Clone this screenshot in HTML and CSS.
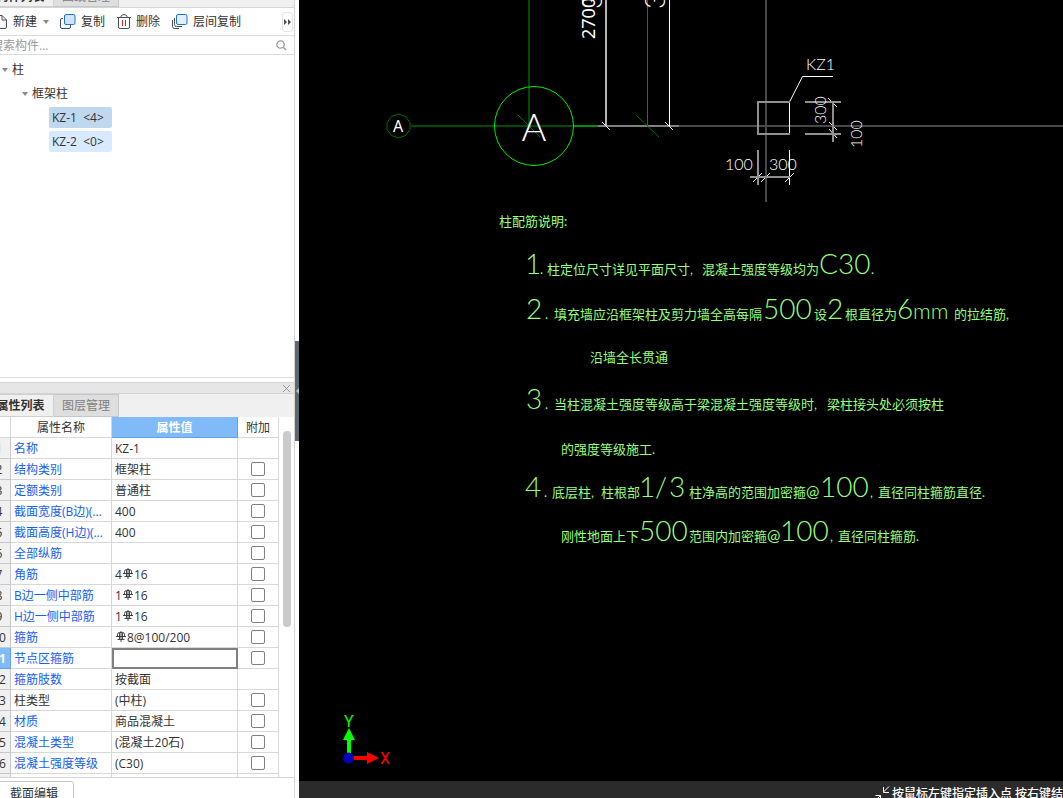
FILE: index.html
```html
<!DOCTYPE html>
<html lang="zh-CN">
<head>
  <meta charset="UTF-8" />
  <meta name="viewport" content="width=device-width, initial-scale=1.0" />
  <title>KZ-1</title>
  <link rel="stylesheet" href="styles.css">
</head>
<body>
  <svg class="defs" aria-hidden="true">
    <!-- rebar grade mark -->
    <symbol id="rebar" viewBox="0 0 10 11">
      <path d="M1.500 6V3.500Q1.500 1.500 3.500 1.500H6.500Q8.500 1.500 8.500 3.500V6M3.500 2V8M6.500 2V8M5 0V11M0 5.500H10M1.500 8.500H8.500" fill="none" stroke="#333" stroke-width=".9" />
    </symbol>
  </svg>

  <div class="app">
    <aside class="dock">
      <div class="tabs tabs-top">
        <button class="tab active">构件列表</button>
        <button class="tab">图纸管理</button>
      </div>

      <div class="toolbar">
        <button class="tool">
          <svg width="20" height="16" viewBox="0 0 20 16"><path d="M6 1.500H14L18.500 6V13Q18.500 14.500 17 14.500H6M14 1.500V6H18.500" fill="none" stroke="#45505c" /></svg>
          <span>新建</span>
          <span class="caret"></span>
        </button>
        <button class="tool">
          <svg width="16" height="16" viewBox="0 0 16 16"><path d="M3 4.500H2Q.5 4.500 .5 6V13Q.5 14.500 2 14.500H9Q10.500 14.500 10.500 13V11" fill="none" stroke="#45505c" /><rect x="4.500" y=".5" width="10.500" height="10" rx="1.500" fill="#d2e4fb" stroke="#1a73e8" /></svg>
          <span>复制</span>
        </button>
        <button class="tool">
          <svg width="14" height="16" viewBox="0 0 14 16"><path d="M0 3.500H14M1.500 3.500V13Q1.500 14.500 3 14.500H11Q12.500 14.500 12.500 13V3.500M3.500 3.500Q4 .5 7 .5T10.500 3.500" fill="none" stroke="#45505c" /><path d="M5.500 6V12M8.500 6V12" stroke="#e02020" /></svg>
          <span>删除</span>
        </button>
        <button class="tool">
          <svg width="16" height="16" viewBox="0 0 16 16"><path d="M.5 6V12.500Q.5 14.500 2.500 14.500H7M2.500 4V10.500Q2.500 12.500 4.500 12.500H10" fill="none" stroke="#45505c" /><rect x="4.500" y=".5" width="10.500" height="10" rx="1.500" fill="#e3effd" stroke="#1a73e8" /></svg>
          <span>层间复制</span>
        </button>
        <button class="more" aria-label="更多">
          <svg width="7" height="6" viewBox="0 0 7 6"><path d="M0 0L3 3L0 6ZM4 0L7 3L4 6Z" fill="#45505c" /></svg>
        </button>
      </div>

      <div class="search">
        <input type="text" placeholder="搜索构件..." aria-label="搜索构件">
        <svg width="11" height="11" viewBox="0 0 11 11"><circle cx="4.500" cy="4.500" r="3.700" fill="none" stroke="#9a9a9a" stroke-width="1.300" /><path d="M7.500 7.500L10 10" stroke="#9a9a9a" stroke-width="1.300" /></svg>
      </div>

      <ul class="tree">
        <li class="level-1"><span class="caret"></span>柱</li>
        <li class="level-2"><span class="caret"></span>框架柱</li>
        <li class="level-3"><span class="chip selected">KZ-1 &nbsp;&lt;4&gt;</span></li>
        <li class="level-3"><span class="chip">KZ-2 &nbsp;&lt;0&gt;</span></li>
      </ul>

      <div class="pane-title">
        <button class="close" aria-label="关闭">
          <svg width="7" height="7" viewBox="0 0 7 7"><path d="M0 0L7 7M7 0L0 7" stroke="#999" /></svg>
        </button>
      </div>

      <div class="tabs">
        <button class="tab active">属性列表</button>
        <button class="tab">图层管理</button>
      </div>

      <div class="props">
        <table>
          <thead>
            <tr><th class="num"></th><th class="name">属性名称</th><th class="value current">属性值</th><th class="extra">附加</th></tr>
          </thead>
          <tbody>
            <tr><td class="num first">1</td><td class="name">名称</td><td>KZ-1</td><td class="extra"></td></tr>
            <tr><td class="num">2</td><td class="name">结构类别</td><td>框架柱</td><td class="extra"><input type="checkbox" aria-label="结构类别"></td></tr>
            <tr><td class="num">3</td><td class="name">定额类别</td><td>普通柱</td><td class="extra"><input type="checkbox" aria-label="定额类别"></td></tr>
            <tr><td class="num">4</td><td class="name">截面宽度(B边)(...</td><td>400</td><td class="extra"><input type="checkbox" aria-label="截面宽度"></td></tr>
            <tr><td class="num">5</td><td class="name">截面高度(H边)(...</td><td>400</td><td class="extra"><input type="checkbox" aria-label="截面高度"></td></tr>
            <tr><td class="num">6</td><td class="name">全部纵筋</td><td></td><td class="extra"><input type="checkbox" aria-label="全部纵筋"></td></tr>
            <tr><td class="num">7</td><td class="name">角筋</td><td>4<svg class="rebar"><use href="#rebar" /></svg>16</td><td class="extra"><input type="checkbox" aria-label="角筋"></td></tr>
            <tr><td class="num">8</td><td class="name">B边一侧中部筋</td><td>1<svg class="rebar"><use href="#rebar" /></svg>16</td><td class="extra"><input type="checkbox" aria-label="B边一侧中部筋"></td></tr>
            <tr><td class="num">9</td><td class="name">H边一侧中部筋</td><td>1<svg class="rebar"><use href="#rebar" /></svg>16</td><td class="extra"><input type="checkbox" aria-label="H边一侧中部筋"></td></tr>
            <tr><td class="num">10</td><td class="name">箍筋</td><td><svg class="rebar"><use href="#rebar" /></svg>8@100/200</td><td class="extra"><input type="checkbox" aria-label="箍筋"></td></tr>
            <tr><td class="num current">11</td><td class="name">节点区箍筋</td><td class="editing"><input type="text" aria-label="节点区箍筋"></td><td class="extra"><input type="checkbox" aria-label="节点区箍筋附加"></td></tr>
            <tr><td class="num">12</td><td class="name">箍筋肢数</td><td>按截面</td><td class="extra"></td></tr>
            <tr><td class="num">13</td><td class="name plain">柱类型</td><td>(中柱)</td><td class="extra"><input type="checkbox" aria-label="柱类型"></td></tr>
            <tr><td class="num">14</td><td class="name">材质</td><td>商品混凝土</td><td class="extra"><input type="checkbox" aria-label="材质"></td></tr>
            <tr><td class="num">15</td><td class="name">混凝土类型</td><td>(混凝土20石)</td><td class="extra"><input type="checkbox" aria-label="混凝土类型"></td></tr>
            <tr><td class="num">16</td><td class="name">混凝土强度等级</td><td>(C30)</td><td class="extra"><input type="checkbox" aria-label="混凝土强度等级"></td></tr>
            <tr><td class="num"></td><td class="name"></td><td></td><td class="extra"></td></tr>
          </tbody>
        </table>
        <div class="track"><div class="thumb"></div></div>
      </div>

      <div class="dock-footer">
        <button class="section-edit">截面编辑</button>
      </div>
    </aside>

    <div class="splitter">
      <button class="collapse" aria-label="收起">
        <svg width="3" height="6" viewBox="0 0 3 6"><path d="M3 0V6L0 3Z" fill="#b8c0c6" /></svg>
      </button>
    </div>

    <main class="view">
      <svg class="drawing" viewBox="299 0 764 781" preserveAspectRatio="xMinYMin meet">
        <!-- axis lines -->
        <g fill="none" stroke-width="2">
          <path d="M529 0V126M411 126H574" stroke="#004a00" />
          <path d="M574 126H598" stroke="#009000" />
          <path d="M598 126H679" stroke="#808080" />
          <path d="M679 126H1063M766 0V202" stroke="#484848" />
          <path d="M606 0V126" stroke="#b4b4b4" />
        </g>
        <path d="M647.500 0V126" stroke="#008c00" />
        <path d="M669.500 0V126" stroke="#fff" />
        <path d="M518 115L540 137M636 115L659 137" stroke="#007000" />
        <path d="M602 122L610 130M665 122L673 130" stroke="#fff" />

        <!-- axis bubbles -->
        <path d="M398.500 114L405.500 116.500L410 122.500V129.500L405.500 135.500L398.500 138L391.500 135.500L387 129.500V122.500L391.500 116.500Z" fill="none" stroke="#007000" />
        <text class="axis" x="393" y="132">A</text>
        <circle cx="534" cy="126" r="39.500" fill="none" stroke="#00f000" />
        <text class="axis-big" x="534" y="141" text-anchor="middle">A</text>

        <!-- dimension text cut by the top edge -->
        <text class="dim-bold" transform="translate(595 39) rotate(-90)">2700</text>
        <text class="cad" transform="translate(602 9) rotate(-90)">3</text>
        <text class="cad" transform="translate(665 9) rotate(-90)">3</text>

        <!-- column KZ1 -->
        <g fill="none" stroke="#fff">
          <path d="M789.500 134V102L802.500 76.500H833" />
          <path d="M789.500 150V185" />
          <path d="M753 182L762 173M761 182L770 173M785 182L794 173" />
          <path d="M828 98L837 107M829 122L837 130M829 129L837 138" />
        </g>
        <g fill="none" stroke="#909090" stroke-width="2">
          <path d="M790 102H758V134H790" />
          <path d="M758 150V185M750 177H790" />
          <path d="M805 102H841M805 134H841M833 102V142" />
        </g>
        <text class="dim" x="806" y="70">KZ1</text>
        <text class="dim" x="725" y="170">100</text>
        <text class="dim" x="769" y="170">300</text>
        <text class="dim" transform="translate(826 124) rotate(-90)">300</text>
        <text class="dim" transform="translate(862 148) rotate(-90)">100</text>

        <!-- notes -->
        <g class="notes">
          <text x="499" y="226">柱配筋说明:</text>
          <text y="274"><tspan class="cad" x="525">1</tspan><tspan x="540">.</tspan><tspan x="547">柱定位尺寸详见平面尺寸,</tspan><tspan x="702">混凝土强度等级均为</tspan><tspan class="cad" x="819">C</tspan><tspan class="cad" x="838">30</tspan><tspan x="871">.</tspan></text>
          <text y="319"><tspan class="cad" x="526">2</tspan><tspan x="545">.</tspan><tspan x="554">填充墙应沿框架柱及剪力墙全高每隔</tspan><tspan class="cad" x="763">500</tspan><tspan x="814">设</tspan><tspan class="cad" x="827">2</tspan><tspan x="845">根直径为</tspan><tspan class="cad" x="897">6</tspan><tspan class="cad mm" x="913">mm</tspan><tspan x="954">的拉结筋,</tspan></text>
          <text x="590" y="362">沿墙全长贯通</text>
          <text y="409"><tspan class="cad" x="526">3</tspan><tspan x="545">.</tspan><tspan x="554">当柱混凝土强度等级高于梁混凝土强度等级时,</tspan><tspan x="827">梁柱接头处必须按柱</tspan></text>
          <text x="561" y="454">的强度等级施工.</text>
          <text y="497"><tspan class="cad" x="525">4</tspan><tspan x="544">.</tspan><tspan x="552">底层柱,</tspan><tspan x="601">柱根部</tspan><tspan class="cad" x="639">1</tspan><tspan class="cad" x="655">/</tspan><tspan class="cad" x="669">3</tspan><tspan x="689">柱净高的范围加密箍</tspan><tspan class="mark" x="806">@</tspan><tspan class="cad" x="820">100</tspan><tspan x="870">,</tspan><tspan x="878">直径同柱箍筋直径.</tspan></text>
          <text y="541"><tspan x="561">刚性地面上下</tspan><tspan class="cad" x="639">500</tspan><tspan x="689">范围内加密箍</tspan><tspan class="mark" x="767">@</tspan><tspan class="cad" x="780">100</tspan><tspan x="830">,</tspan><tspan x="838">直径同柱箍筋.</tspan></text>
        </g>

        <!-- coordinate icon -->
        <path d="M347 755V740H343L349 728L355 740H351V755Z" fill="#0f0" />
        <path d="M353 756H367V752L379 758L367 764V760H353Z" fill="#f00" />
        <circle cx="348.500" cy="758" r="5.500" fill="#0000b8" />
        <text class="ucs" x="344" y="727" fill="#0f0">Y</text>
        <text class="ucs" x="380" y="764" fill="#f00">X</text>
      </svg>
      <footer class="status">
        <svg width="16" height="16" viewBox="0 0 16 16"><path d="M15 .5L9.500 6M9.500 1V6.500H15M1 15L6.500 9.500M1.500 9.500H6.500V14.500" fill="none" stroke="#fff" /></svg>
        <span>按鼠标左键指定插入点 按右键结</span>
      </footer>
    </main>
  </div>
</body>
</html>
```
FILE: styles.css
```css
* {
  box-sizing: border-box;
}
body {
  margin: 0;
  background: #fff;
  color: #333;
  font-family: "Open Sans", "Noto Sans CJK SC", sans-serif;
  font-size: 12px;
  line-height: 16px;
  overflow: hidden;
}
button,
input {
  font: inherit;
  color: inherit;
  margin: 0;
}
button {
  padding: 0;
  border: 0;
  background: none;
  white-space: nowrap;
}
svg {
  display: block;
  flex-shrink: 0;
}
.defs {
  position: absolute;
  width: 0;
  height: 0;
}
/* the dock hangs a little over the left edge of the window */
.app {
  display: flex;
  height: 100vh;
  margin-left: -12px;
}
.dock {
  display: flex;
  flex-direction: column;
  flex: 0 0 307px;
  border-right: 1px solid #d4d4d4;
  overflow: hidden;
}
.tabs {
  display: flex;
  flex: 0 0 23px;
  background: #f0f0f0;
}
.tab {
  flex-shrink: 0;
  padding: 0 8px;
  border: 1px solid #c4c8cc;
  border-left: 0;
  background: #dedede;
  color: #808080;
}
.tab.active {
  width: 66px;
  border-color: #d0d0d0;
  background: #f0f0f0;
  color: #333;
  font-weight: bold;
}
.tabs-top {
  flex-basis: 8px;
  align-items: flex-end;
  overflow: hidden;
  border-bottom: 1px solid #d4d4d4;
}
.tabs-top .tab {
  height: 20px;
}
.toolbar {
  display: flex;
  flex: 0 0 28px;
  align-items: center;
  gap: 12px;
  border-bottom: 1px solid #dcdcdc;
}
.tool {
  display: flex;
  align-items: center;
  gap: 4px;
  padding-top: 1px;
}
.tool span:first-of-type {
  padding-left: 1px;
}
.caret {
  border: 3px solid transparent;
  border-top: 4px solid #888;
  border-bottom: 0;
}
.tool .caret {
  margin: 0 -1px 0 2px;
}
.more {
  display: flex;
  align-items: center;
  justify-content: center;
  width: 11px;
  height: 20px;
  margin-left: auto;
  margin-right: 1px;
  border: 1px solid #e4e4e4;
  border-radius: 3px;
}
.search {
  display: flex;
  flex: 0 0 19px;
  align-items: center;
  padding: 0 7px 0 3px;
  border-bottom: 1px solid #dcdcdc;
}
.search input {
  flex: 1;
  min-width: 0;
  height: 17px;
  padding: 0;
  border: 0;
  outline: 0;
}
.search input::placeholder {
  color: #999;
}
.tree {
  flex: 0 0 323px;
  margin: 0;
  padding: 3px 0 0;
  border-bottom: 1px solid #dcdcdc;
  list-style: none;
}
.tree li {
  display: flex;
  align-items: center;
  gap: 4px;
  height: 24px;
}
.tree .level-1 {
  padding-left: 14px;
}
.tree .level-2 {
  padding-left: 34px;
}
.tree .level-3 {
  align-items: flex-start;
  padding: 1px 0 0 61px;
}
.chip {
  width: 63px;
  height: 21px;
  padding: 0 3px;
  border-radius: 2px;
  background: #d8eaff;
  line-height: 21px;
  white-space: nowrap;
}
.chip.selected {
  background: #bfd8f0;
}
.pane-title {
  display: flex;
  flex: 0 0 12px;
  align-items: center;
  justify-content: flex-end;
  margin-top: 4px;
  padding-right: 4px;
  border-top: 1px solid #d4d4d4;
  border-bottom: 1px solid #d4d4d4;
  background: #e6e6e6;
}
.props {
  display: flex;
  flex: 1;
  min-height: 0;
  overflow: hidden;
  border-bottom: 1px solid #d4d4d4;
}
table {
  flex: 0 0 291px;
  width: 291px;
  height: 0;
  table-layout: fixed;
  border-collapse: separate;
  border-spacing: 0;
}
th,
td {
  height: 21px;
  padding: 2px 3px 0;
  border-right: 1px solid #d8d8d8;
  border-bottom: 1px solid #d8d8d8;
  font-weight: normal;
  line-height: 16px;
  text-align: left;
  white-space: nowrap;
  overflow: hidden;
}
th {
  text-align: center;
}
.num {
  width: 23px;
  padding: 2px 0 0;
  text-align: center;
}
.name {
  width: 101px;
}
.value {
  width: 126px;
}
.extra {
  width: 41px;
  padding: 0;
  text-align: center;
}
th.extra {
  padding-top: 2px;
}
td.num {
  background: #f0f0f0;
  border-color: #c8c8c8;
}
td.first {
  color: #2f86d8;
}
td.name {
  color: #1560f5;
}
td.plain {
  color: #333;
}
th.current,
td.num.current {
  background: #80baf9;
  border-color: #62a2e8;
  color: #fff;
  font-weight: bold;
}
.editing {
  padding: 0;
  border: 0;
}
.editing input {
  display: block;
  width: 100%;
  height: 21px;
  border: 2px solid #808080;
  outline: 0;
}
input[type="checkbox"] {
  display: block;
  width: 14px;
  height: 14px;
  margin: 0 auto;
  appearance: none;
  border: 1px solid #808080;
  border-radius: 2px;
  background: #fff;
}
.rebar {
  display: inline-block;
  width: 10px;
  height: 11px;
  margin: 0 1px;
  vertical-align: 0;
}
.track {
  flex: 1;
  padding: 14px 3px 0 4px;
}
.thumb {
  height: 196px;
  border-radius: 4px;
  background: #cacaca;
}
.dock-footer {
  flex: 0 0 20px;
  padding-top: 3px;
  overflow: hidden;
}
.section-edit {
  width: 86px;
  height: 26px;
  padding-left: 6px;
  border: 1px solid #c8c8c8;
  border-radius: 0 3px 0 0;
}
.splitter {
  display: flex;
  flex: 0 0 4px;
  padding-top: 341px;
}
.collapse {
  display: flex;
  align-items: center;
  justify-content: flex-end;
  width: 4px;
  height: 100px;
  background: #5c6873;
}
.view {
  display: flex;
  flex: 1;
  flex-direction: column;
  min-width: 0;
  background: #000;
}
.drawing {
  flex: 1;
  width: 100%;
  min-height: 0;
  font-family: Lato, "Noto Sans CJK SC", sans-serif;
  fill: #fff;
}
.axis {
  font-family: "Noto Sans", sans-serif;
  font-size: 16px;
}
.axis-big {
  font-size: 38px;
  font-weight: 300;
}
.cad {
  font-size: 28px;
  font-weight: 300;
}
.mm {
  font-size: 22px;
}
.mark {
  font-size: 16px;
}
.dim-bold {
  font-family: "Noto Sans", sans-serif;
  font-size: 18px;
}
.dim {
  font-size: 16px;
  font-weight: 300;
}
.notes {
  fill: #96ff78;
  font-size: 13px;
}
.ucs {
  font-family: Roboto, sans-serif;
  font-size: 16px;
}
.status {
  display: flex;
  flex: 0 0 17px;
  justify-content: flex-end;
  gap: 2px;
  padding-top: 5px;
  overflow: hidden;
  background: #2b2b2b;
  color: #fff;
  font-weight: 500;
  white-space: nowrap;
}
```
